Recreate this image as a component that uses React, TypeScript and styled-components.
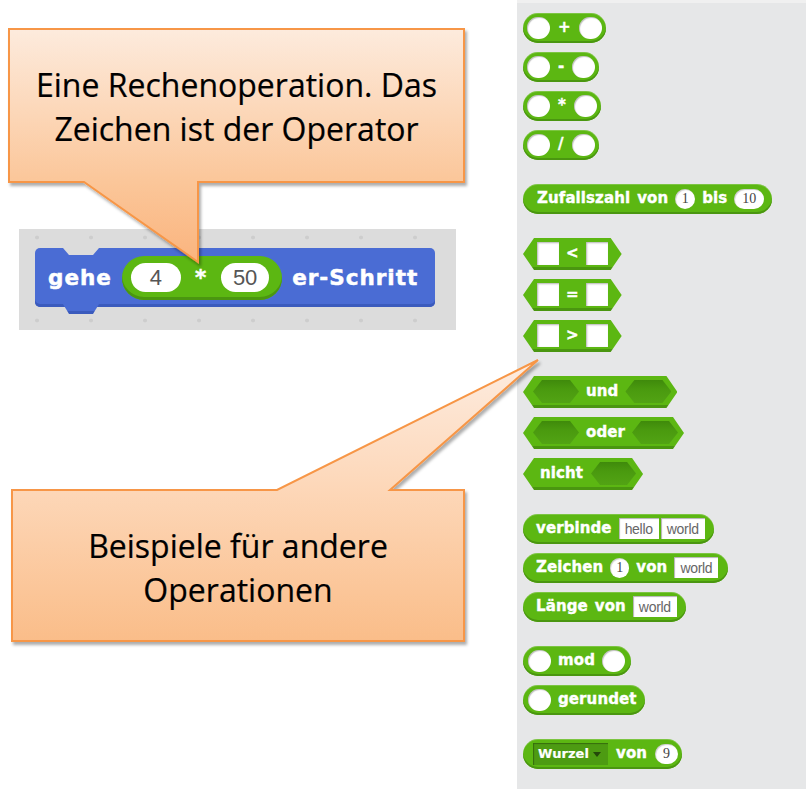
import React from "react";
import styled, { createGlobalStyle } from "styled-components";

const GlobalStyle = createGlobalStyle`
  html, body { margin: 0; padding: 0; background: #ffffff; }
  body { width: 806px; height: 789px; overflow: hidden; font-family: "DejaVu Sans", sans-serif; }
`;

const GREEN = "#5cb712";
const GREEN_EDGE = "#4a9610";
const SLOT_DARK = "#4a9a0f";

const Page = styled.div`
  display: flex;
  width: 806px;
  height: 789px;
`;

const LeftPane = styled.div`
  width: 517px;
  flex-shrink: 0;
  display: flex;
  flex-direction: column;
  align-items: flex-start;
`;

/* ---------- Callouts ---------- */

const CalloutBox = styled.div<{ $w: number; $h: number; $mt: number; $ml: number }>`
  position: relative;
  z-index: 2;
  width: ${(p) => p.$w}px;
  height: ${(p) => p.$h}px;
  margin: ${(p) => p.$mt}px 0 0 ${(p) => p.$ml}px;
  display: flex;
  align-items: center;
  justify-content: center;
  text-align: center;
`;

const Balloon = styled.svg`
  position: absolute;
  left: 0;
  top: 0;
  overflow: visible;
`;

const CalloutText = styled.div<{ $dy: number }>`
  position: relative;
  font-family: "Open Sans", sans-serif;
  font-size: 32px;
  line-height: 44px;
  color: #000;
  margin-top: ${(p) => p.$dy}px;
  white-space: nowrap;
  -webkit-text-stroke: 0.2px #000;
`;

type CalloutProps = {
  id: string;
  w: number;
  h: number;
  mt: number;
  ml: number;
  path: string;
  stops: [number, string][];
  dy: number;
  children: React.ReactNode;
};

function Callout({ id, w, h, mt, ml, path, stops, dy, children }: CalloutProps) {
  return (
    <CalloutBox $w={w} $h={h} $mt={mt} $ml={ml}>
      <Balloon width={w} height={h} viewBox={`0 0 ${w} ${h}`}>
        <defs>
          <linearGradient id={`${id}-g`} x1="0" y1="0" x2="0" y2="1">
            {stops.map(([o, c]) => (
              <stop key={o} offset={o} stopColor={c} />
            ))}
          </linearGradient>
          <filter id={`${id}-s`} x="-10%" y="-10%" width="125%" height="125%">
            <feDropShadow dx="2" dy="3" stdDeviation="1.6" floodColor="#000" floodOpacity="0.32" />
          </filter>
        </defs>
        <path
          d={path}
          fill={`url(#${id}-g)`}
          stroke="#f79646"
          strokeWidth="2"
          filter={`url(#${id}-s)`}
        />
      </Balloon>
      <CalloutText $dy={dy}>{children}</CalloutText>
    </CalloutBox>
  );
}

/* ---------- Script area with motion block ---------- */

const ScriptArea = styled.div`
  margin: 46px 0 0 19px;
  width: 437px;
  height: 101px;
  box-sizing: border-box;
  padding: 19px 0 0 16px;
  background-color: #dcdcdc;
  background-image: radial-gradient(circle, #cdcdcd 1.6px, transparent 2.2px);
  background-size: 54px 83px;
  background-position: -9px -33px;
`;

const MotionBlock = styled.div`
  position: relative;
  display: inline-flex;
  align-items: center;
  gap: 10px;
  width: 400px;
  height: 59px;
  box-sizing: border-box;
  padding: 0 17px 0 13px;
  background: #4a6cd4;
  border-radius: 5px;
  box-shadow: inset 0 -3px 0 #3b5bbd;

  &::before {
    content: "";
    position: absolute;
    top: 0;
    left: 28px;
    width: 36px;
    height: 7px;
    background: #dcdcdc;
    clip-path: polygon(0 0, 100% 0, calc(100% - 6px) 100%, 6px 100%);
  }

  &::after {
    content: "";
    position: absolute;
    top: calc(100% - 3px);
    left: 28px;
    width: 36px;
    height: 10px;
    background: linear-gradient(#4a6cd4 calc(100% - 3px), #3b5bbd 0);
    clip-path: polygon(0 0, 100% 0, calc(100% - 6px) 100%, 6px 100%);
  }
`;

const MotionLabel = styled.span`
  font-family: "DejaVu Sans", sans-serif;
  font-weight: 700;
  font-size: 21.5px;
  letter-spacing: 1px;
  color: #fff;
  white-space: nowrap;
  -webkit-text-stroke: 0.5px #fff;
`;

const BigReporter = styled.div`
  display: inline-flex;
  align-items: center;
  gap: 14px;
  height: 44px;
  box-sizing: border-box;
  padding: 0 13px 0 9px;
  border-radius: 22px;
  background: ${GREEN};
  box-shadow: inset 0 -3px 0 ${GREEN_EDGE};
`;

const BigValue = styled.span<{ $w: number }>`
  display: inline-flex;
  align-items: center;
  justify-content: center;
  width: ${(p) => p.$w}px;
  height: 29px;
  border-radius: 15px;
  background: #fff;
  font-family: "Liberation Sans", sans-serif;
  font-size: 22px;
  color: #555;
`;

/* ---------- Palette ---------- */

const Palette = styled.div`
  width: 289px;
  flex-shrink: 0;
  box-sizing: border-box;
  background: #e6e7e8;
  border-top: 3px solid #f0f0f0;
  padding: 10px 0 0 6px;
  display: flex;
  flex-direction: column;
  align-items: flex-start;
  gap: 24px;
`;

const Group = styled.div`
  display: flex;
  flex-direction: column;
  align-items: flex-start;
  gap: 9px;
`;

const Reporter = styled.div<{ $pl: number; $pr: number; $gap: number }>`
  display: inline-flex;
  align-items: center;
  gap: ${(p) => p.$gap}px;
  height: 30px;
  box-sizing: border-box;
  padding: 0 ${(p) => p.$pr}px 1px ${(p) => p.$pl}px;
  border-radius: 15px;
  background: ${GREEN};
  box-shadow: inset 0 -2px 0 ${GREEN_EDGE}, inset 0 1px 0 rgba(255, 255, 255, 0.2);
`;

const BoolBlock = styled.div<{ $pl: number; $pr: number; $gap: number }>`
  display: inline-flex;
  align-items: center;
  gap: ${(p) => p.$gap}px;
  height: 32px;
  box-sizing: border-box;
  padding: 0 ${(p) => p.$pr}px 1px ${(p) => p.$pl}px;
  background: linear-gradient(${GREEN} calc(100% - 3px), ${GREEN_EDGE} 0);
  clip-path: polygon(11px 0, calc(100% - 11px) 0, 100% 50%, calc(100% - 11px) 100%, 11px 100%, 0 50%);
`;

const Label = styled.span`
  font-family: "DejaVu Sans", sans-serif;
  font-weight: 700;
  font-size: 15px;
  letter-spacing: 0.1px;
  line-height: 1;
  color: #fff;
  white-space: nowrap;
  -webkit-text-stroke: 0.4px #fff;
`;

const RoundSlot = styled.span`
  width: 23px;
  height: 22px;
  border-radius: 11px;
  background: #fff;
  box-shadow: inset 1px 1px 1px rgba(0, 0, 0, 0.25);
`;

const NumSlot = styled.span<{ $w: number }>`
  display: inline-flex;
  align-items: center;
  justify-content: center;
  width: ${(p) => p.$w}px;
  height: 20px;
  border-radius: 10px;
  background: #fff;
  font-family: "Liberation Serif", serif;
  font-size: 14px;
  color: #444;
  box-shadow: inset 1px 1px 1px rgba(0, 0, 0, 0.2);
`;

const TextSlot = styled.span`
  display: inline-flex;
  align-items: center;
  height: 21px;
  padding: 0 6px;
  background: #fff;
  font-family: "Liberation Sans", sans-serif;
  font-size: 14px;
  letter-spacing: -0.3px;
  color: #666;
  box-shadow: inset 1px 1px 1px rgba(0, 0, 0, 0.3);
`;

const SlotPair = styled.span`
  display: inline-flex;
  gap: 2px;
`;

const SquareSlot = styled.span`
  width: 22px;
  height: 23px;
  background: #fff;
  box-shadow: inset 1px 1px 2px rgba(0, 0, 0, 0.3);
`;

const HexSlot = styled.span<{ $w: number }>`
  width: ${(p) => p.$w}px;
  height: 23px;
  background: linear-gradient(#3f8a0b, ${SLOT_DARK} 40%, #52a314);
  clip-path: polygon(9px 0, calc(100% - 9px) 0, 100% 50%, calc(100% - 9px) 100%, 9px 100%, 0 50%);
`;

const Dropdown = styled.span`
  display: inline-flex;
  align-items: center;
  gap: 4px;
  width: 75px;
  height: 22px;
  box-sizing: border-box;
  padding-left: 5px;
  background: #4d9b12;
  box-shadow: inset 1px 1px 1px rgba(0, 0, 0, 0.3);

  &::after {
    content: "";
    flex-shrink: 0;
    margin-top: 2px;
    border-left: 4px solid transparent;
    border-right: 4px solid transparent;
    border-top: 5px solid #24480a;
  }
`;

const DropText = styled(Label)`
  font-size: 13px;
  letter-spacing: 0;
  -webkit-text-stroke: 0.2px #fff;
`;

export default function App() {
  return (
    <Page>
      <GlobalStyle />
      <LeftPane>
        <Callout
          id="c1"
          w={457}
          h={155}
          mt={28}
          ml={8}
          dy={2}
          path="M1,1 H456 V154 H190 V234 L76,154 H1 Z"
          stops={[
            [0, "#fdebdd"],
            [0.66, "#fbc699"],
            [1, "#fab47e"],
          ]}
        >
          Eine Rechenoperation. Das
          <br />
          Zeichen ist der Operator
        </Callout>

        <ScriptArea>
          <MotionBlock>
            <MotionLabel>gehe</MotionLabel>
            <BigReporter>
              <BigValue $w={50}>4</BigValue>
              <MotionLabel>*</MotionLabel>
              <BigValue $w={48}>50</BigValue>
            </BigReporter>
            <MotionLabel>er-Schritt</MotionLabel>
          </MotionBlock>
        </ScriptArea>

        <Callout
          id="c2"
          w={454}
          h={153}
          mt={159}
          ml={11}
          dy={4}
          path="M1,1 H266 L527,-129 L379,1 H453 V152 H1 Z"
          stops={[
            [0, "#fdece0"],
            [0.46, "#fdd7b8"],
            [1, "#fabd89"],
          ]}
        >
          Beispiele für andere
          <br />
          Operationen
        </Callout>
      </LeftPane>

      <Palette>
        <Group>
          {["+", "-", "*", "/"].map((op) => (
            <Reporter key={op} $pl={4} $pr={4} $gap={8}>
              <RoundSlot />
              <Label>{op}</Label>
              <RoundSlot />
            </Reporter>
          ))}
        </Group>

        <Group>
          <Reporter $pl={14} $pr={8} $gap={7}>
            <Label>Zufallszahl</Label>
            <Label>von</Label>
            <NumSlot $w={20}>1</NumSlot>
            <Label>bis</Label>
            <NumSlot $w={30}>10</NumSlot>
          </Reporter>
        </Group>

        <Group>
          {["<", "=", ">"].map((op) => (
            <BoolBlock key={op} $pl={14} $pr={14} $gap={7}>
              <SquareSlot />
              <Label>{op}</Label>
              <SquareSlot />
            </BoolBlock>
          ))}
        </Group>

        <Group>
          <BoolBlock $pl={10} $pr={6} $gap={7}>
            <HexSlot $w={46} />
            <Label>und</Label>
            <HexSlot $w={46} />
          </BoolBlock>
          <BoolBlock $pl={10} $pr={6} $gap={7}>
            <HexSlot $w={46} />
            <Label>oder</Label>
            <HexSlot $w={46} />
          </BoolBlock>
          <BoolBlock $pl={17} $pr={7} $gap={8}>
            <Label>nicht</Label>
            <HexSlot $w={45} />
          </BoolBlock>
        </Group>

        <Group>
          <Reporter $pl={13} $pr={9} $gap={7}>
            <Label>verbinde</Label>
            <SlotPair>
              <TextSlot>hello</TextSlot>
              <TextSlot>world</TextSlot>
            </SlotPair>
          </Reporter>
          <Reporter $pl={13} $pr={10} $gap={7}>
            <Label>Zeichen</Label>
            <NumSlot $w={19}>1</NumSlot>
            <Label>von</Label>
            <TextSlot>world</TextSlot>
          </Reporter>
          <Reporter $pl={13} $pr={9} $gap={7}>
            <Label>Länge</Label>
            <Label>von</Label>
            <TextSlot>world</TextSlot>
          </Reporter>
        </Group>

        <Group>
          <Reporter $pl={5} $pr={6} $gap={7}>
            <RoundSlot />
            <Label>mod</Label>
            <RoundSlot />
          </Reporter>
          <Reporter $pl={5} $pr={8} $gap={7}>
            <RoundSlot />
            <Label>gerundet</Label>
          </Reporter>
        </Group>

        <Group>
          <Reporter $pl={10} $pr={4} $gap={8}>
            <Dropdown>
              <DropText>Wurzel</DropText>
            </Dropdown>
            <Label>von</Label>
            <NumSlot $w={23}>9</NumSlot>
          </Reporter>
        </Group>
      </Palette>
    </Page>
  );
}
